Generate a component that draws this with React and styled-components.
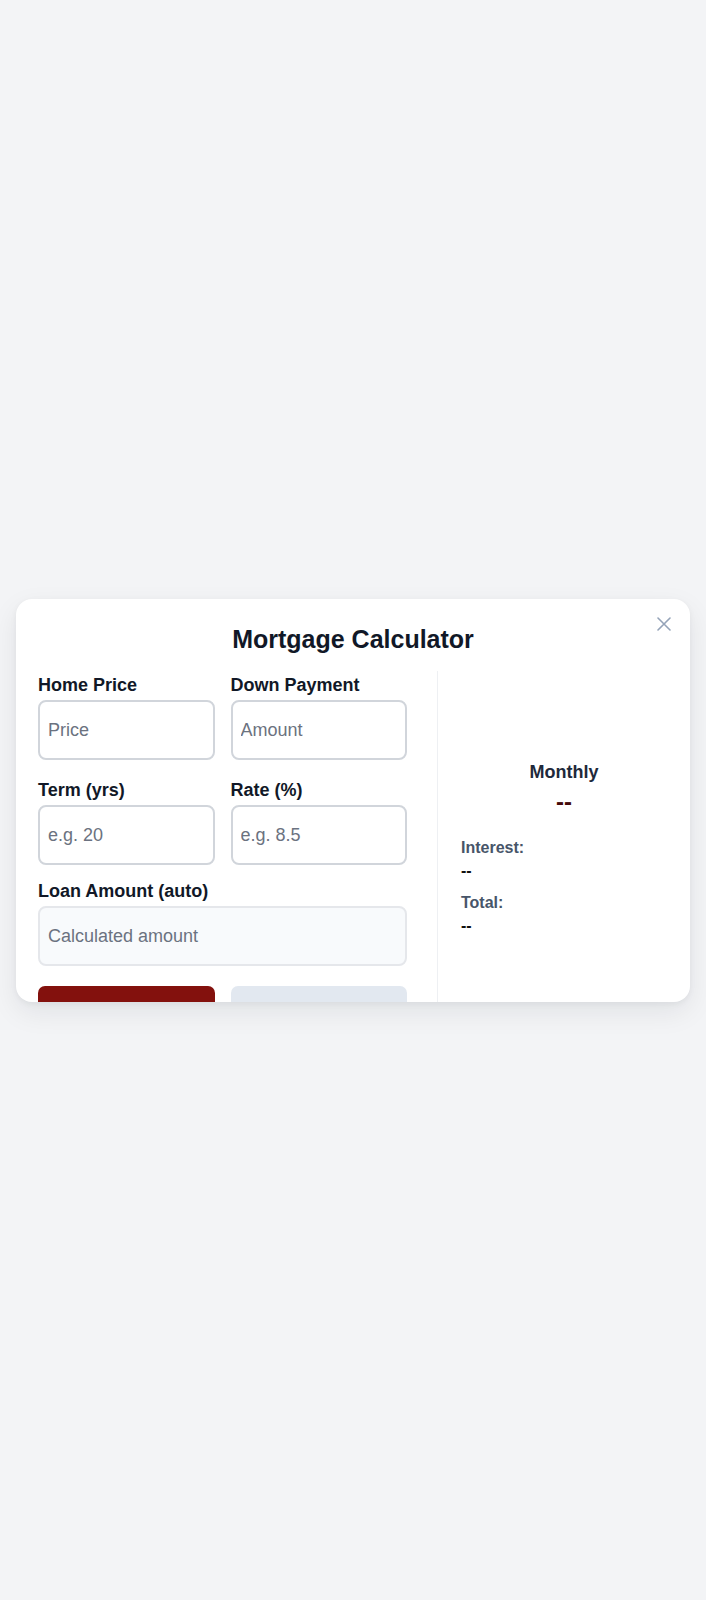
import React, { useState } from "react";
import styled, { createGlobalStyle } from "styled-components";

const GlobalStyle = createGlobalStyle`
  * { box-sizing: border-box; }
  body {
    margin: 0;
    background: #f3f4f6;
    font-family: "Liberation Sans", Arial, sans-serif;
  }
`;

// page wrapper, centers the modal
const Page = styled.div`
  min-height: 100vh;
  display: flex;
  align-items: center;
  justify-content: center;
  padding: 0 16px;
`;

const Modal = styled.div`
  position: relative;
  width: 100%;
  height: 403px;
  overflow: hidden;
  background: #ffffff;
  border-radius: 16px;
  padding: 26px 0 0 22px;
  box-shadow: 0 10px 28px rgba(15, 23, 42, 0.08), 0 2px 6px rgba(15, 23, 42, 0.05);
`;

const CloseButton = styled.button`
  position: absolute;
  top: 18px;
  right: 19px;
  padding: 0;
  border: none;
  background: none;
  display: flex;
  cursor: pointer;
`;

const Title = styled.h2`
  margin: 0 22px 18px 0;
  text-align: center;
  font-size: 25px;
  line-height: 1.149;
  font-weight: 700;
  color: #111827;
`;

const Body = styled.div`
  display: grid;
  grid-template-columns: minmax(0, 1fr) 253px;
  column-gap: 30px;
`;

const FormColumn = styled.div`
  display: flex;
  flex-direction: column;
  gap: 16px;
  padding-top: 4px;
`;

const FieldGrid = styled.div`
  display: grid;
  grid-template-columns: 1fr 1fr;
  gap: 20px 16px;
`;

const Field = styled.label`
  display: flex;
  flex-direction: column;
  gap: 4px;
`;

const Label = styled.span`
  font-size: 18px;
  line-height: 21px;
  font-weight: 700;
  color: #111827;
`;

const Input = styled.input`
  width: 100%;
  height: 60px;
  padding: 0 8px;
  font-family: inherit;
  font-size: 18px;
  color: #111827;
  background: ${(p) => (p.readOnly ? "#f8fafc" : "#ffffff")};
  border: 2px solid ${(p) => (p.readOnly ? "#e5e7eb" : "#d1d5db")};
  border-radius: 8px;
  outline: none;

  &::placeholder {
    color: #6b7280;
  }
`;

const ButtonRow = styled.div`
  display: grid;
  grid-template-columns: 1fr 1fr;
  gap: 16px;
  margin-top: 4px;
`;

const Button = styled.button`
  height: 45px;
  border: none;
  border-radius: 7px;
  font-family: inherit;
  font-size: 16px;
  font-weight: 700;
  cursor: pointer;
  background: ${(p) => (p.$primary ? "#83110d" : "#e2e8f0")};
  color: ${(p) => (p.$primary ? "#ffffff" : "#334155")};
`;

const ResultPanel = styled.div`
  display: flex;
  flex-direction: column;
  padding: 91px 23px 0;
  border-left: 1px solid #eef0f3;
`;

const MonthlyLabel = styled.div`
  text-align: center;
  font-size: 18px;
  font-weight: 700;
  color: #1e293b;
`;

const MonthlyValue = styled.div`
  margin-top: 5px;
  text-align: center;
  font-size: 24px;
  font-weight: 700;
  color: #450a0a;
`;

const Stat = styled.div`
  display: flex;
  flex-direction: column;
  gap: 5px;
  margin-top: ${(p) => p.$gap}px;
`;

const StatLabel = styled.span`
  font-size: 16px;
  font-weight: 700;
  color: #475569;
`;

const StatValue = styled.span`
  font-size: 16px;
  font-weight: 700;
  color: #111111;
`;

const CloseIcon = () => (
  <svg width="14" height="14" viewBox="0 0 14 14" fill="none">
    <path d="M1 1 L13 13 M13 1 L1 13" stroke="#94a3b8" strokeWidth="1.6" strokeLinecap="round" />
  </svg>
);

export default function App() {
  const [values, setValues] = useState({ price: "", down: "", term: "", rate: "" });

  const update = (key) => (e) => setValues({ ...values, [key]: e.target.value });

  return (
    <>
      <GlobalStyle />
      <Page>
        <Modal>
          <CloseButton aria-label="Close">
            <CloseIcon />
          </CloseButton>
          <Title>Mortgage Calculator</Title>
          <Body>
            <FormColumn>
              <FieldGrid>
                <Field>
                  <Label>Home Price</Label>
                  <Input placeholder="Price" value={values.price} onChange={update("price")} />
                </Field>
                <Field>
                  <Label>Down Payment</Label>
                  <Input placeholder="Amount" value={values.down} onChange={update("down")} />
                </Field>
                <Field>
                  <Label>Term (yrs)</Label>
                  <Input placeholder="e.g. 20" value={values.term} onChange={update("term")} />
                </Field>
                <Field>
                  <Label>Rate (%)</Label>
                  <Input placeholder="e.g. 8.5" value={values.rate} onChange={update("rate")} />
                </Field>
              </FieldGrid>
              <Field>
                <Label>Loan Amount (auto)</Label>
                <Input placeholder="Calculated amount" readOnly />
              </Field>
              <ButtonRow>
                <Button $primary>Calculate</Button>
                <Button>Reset</Button>
              </ButtonRow>
            </FormColumn>

            <ResultPanel>
              <MonthlyLabel>Monthly</MonthlyLabel>
              <MonthlyValue>--</MonthlyValue>
              <Stat $gap={23}>
                <StatLabel>Interest:</StatLabel>
                <StatValue>--</StatValue>
              </Stat>
              <Stat $gap={14}>
                <StatLabel>Total:</StatLabel>
                <StatValue>--</StatValue>
              </Stat>
            </ResultPanel>
          </Body>
        </Modal>
      </Page>
    </>
  );
}
